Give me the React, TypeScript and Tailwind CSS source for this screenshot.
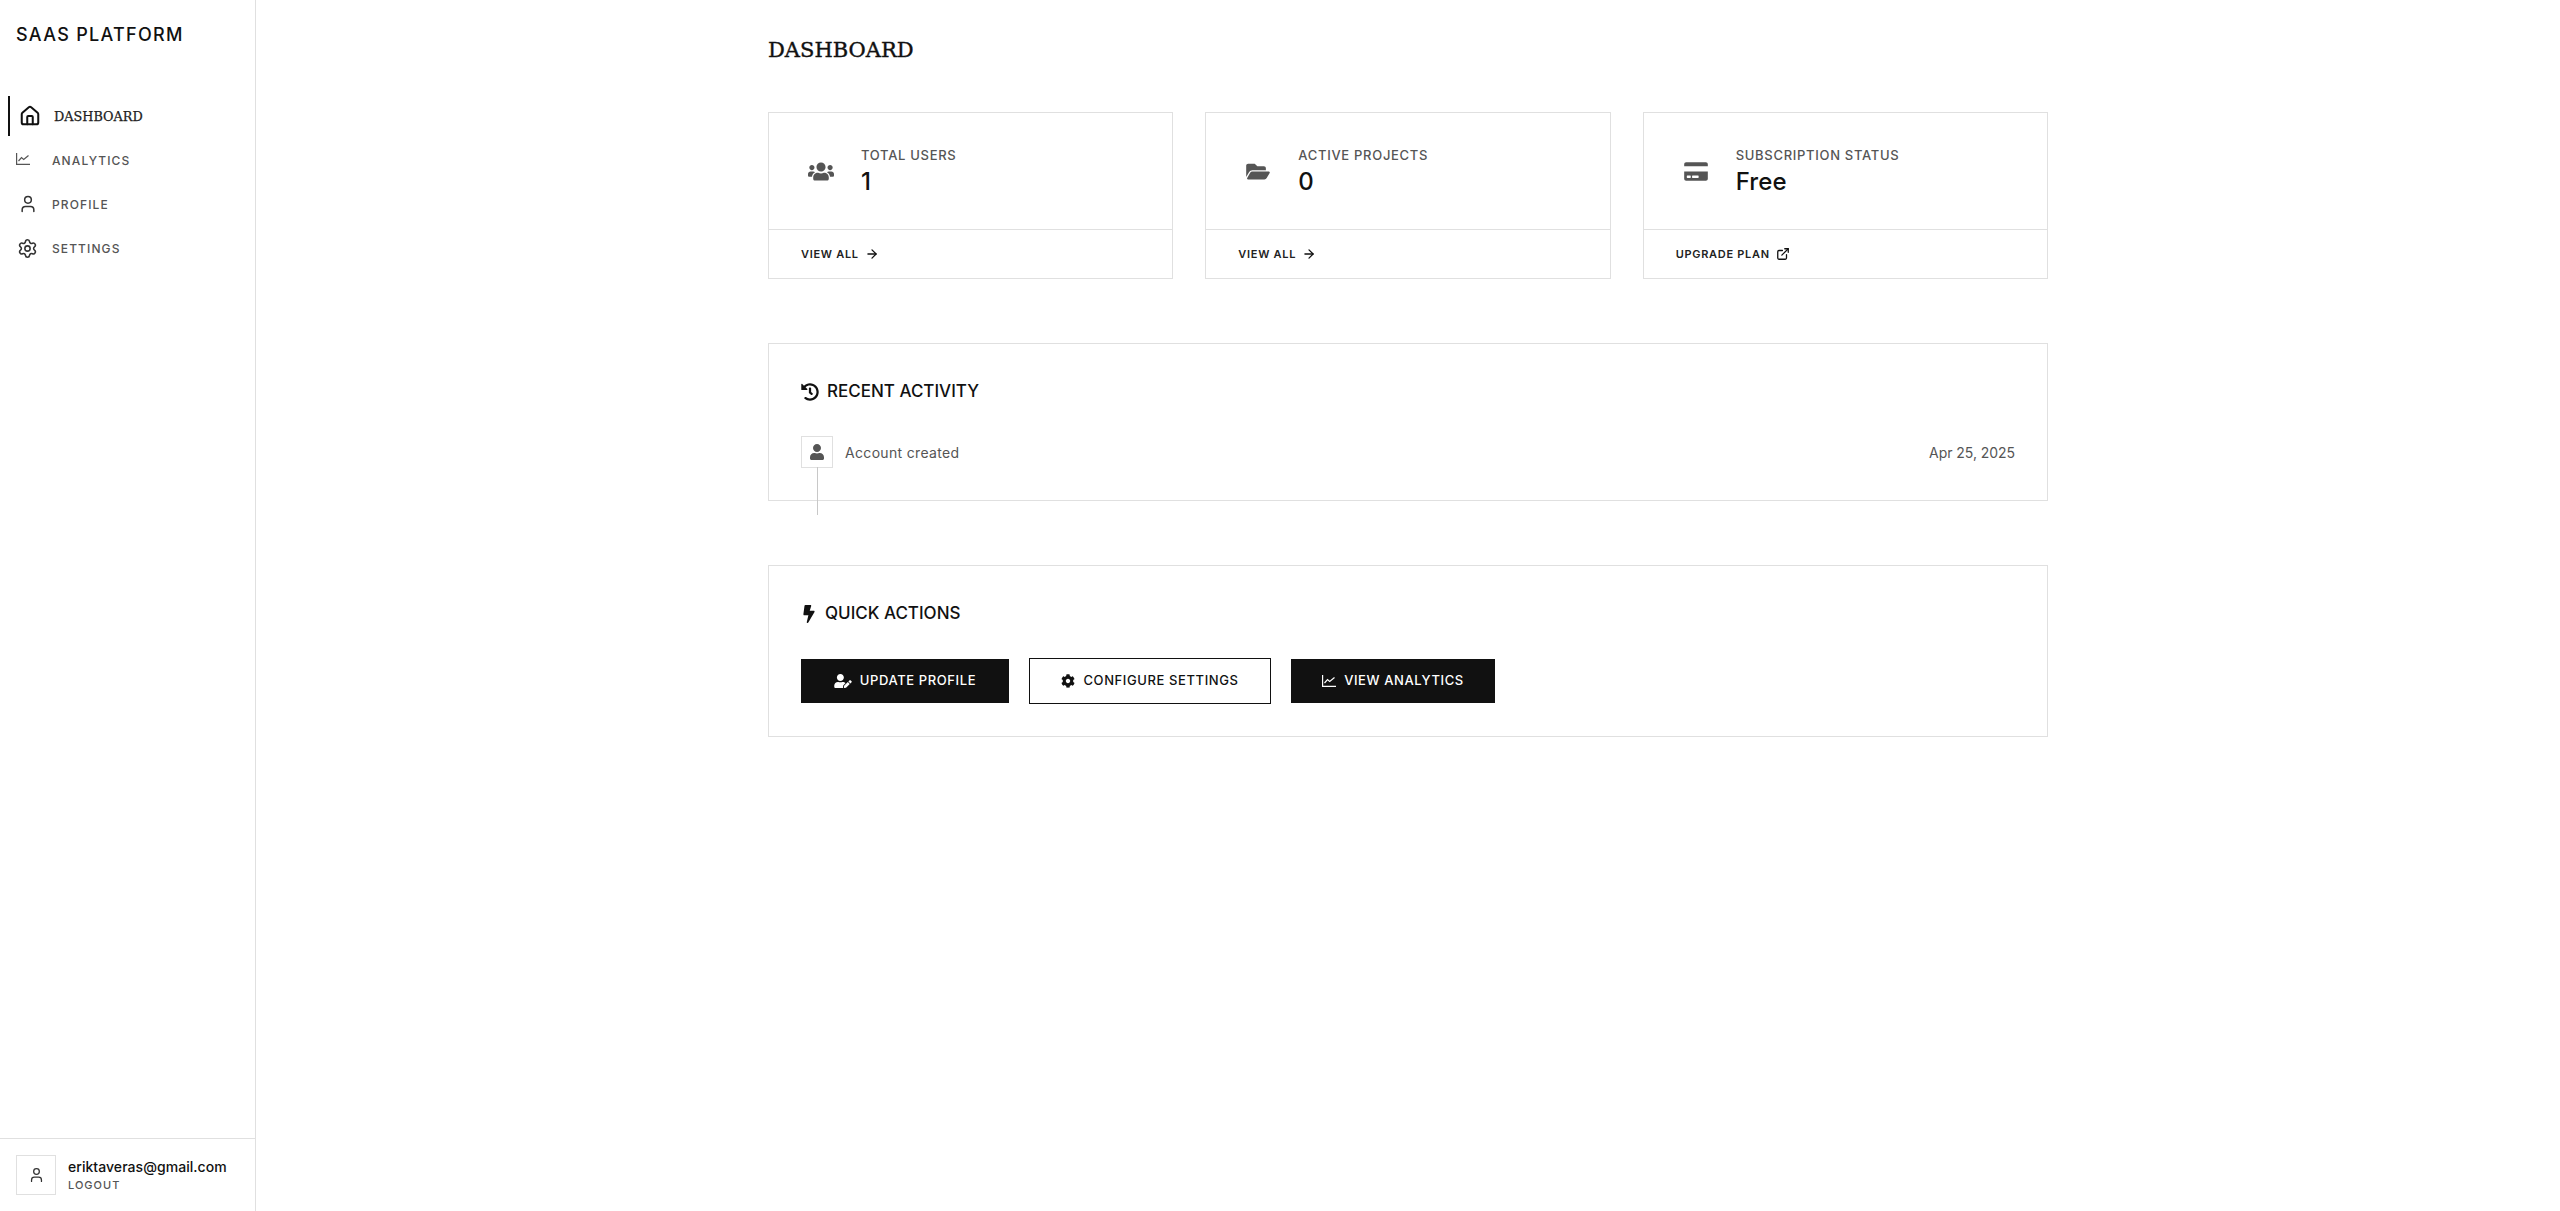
import React from 'react';
import { Home, User, Settings, ArrowRight, ExternalLink } from 'lucide-react';
import { FaUsers, FaFolderOpen, FaCreditCard, FaHistory, FaBolt, FaUser, FaUserEdit, FaCog } from 'react-icons/fa';

const ChartIcon = ({ className }: { className: string }) => (
  <svg viewBox="0 0 14 12" fill="none" stroke="currentColor" strokeWidth="1.2" className={className}>
    <path d="M0.6 0v11.4H14" />
    <path d="M2.5 8 5.5 4.6l2.2 1.8L12.5 2.5" />
  </svg>
);

const stats = [
  { icon: FaUsers, label: 'TOTAL USERS', value: '1', link: 'VIEW ALL', external: false },
  { icon: FaFolderOpen, label: 'ACTIVE PROJECTS', value: '0', link: 'VIEW ALL', external: false },
  { icon: FaCreditCard, label: 'SUBSCRIPTION STATUS', value: 'Free', link: 'UPGRADE PLAN', external: true },
];

const App: React.FC = () => {
  return (
    <div className="flex h-[1211px] bg-white font-['Inter',sans-serif] text-[#111111] overflow-hidden">
      {/* Sidebar */}
      <aside className="flex flex-col w-[256px] shrink-0 border-r border-[#e0e0e0]">
        <div className="h-[68px] pl-4 pt-[22px] text-[18px] leading-[26px] font-medium tracking-[1.3px]">
          SAAS PLATFORM
        </div>
        <nav className="flex flex-col gap-1 pl-2 pt-7">
          <a className="flex items-center h-10 border-l-2 border-[#111111] pl-[9px]">
            <Home className="w-[22px] h-[22px] mr-[13px]" strokeWidth={2.2} />
            <span className="mt-px font-['DejaVu_Serif',serif] text-[12.8px] text-[#222222] [-webkit-text-stroke:0.25px]">DASHBOARD</span>
          </a>
          <a className="flex h-10 pl-2 text-[#555555]">
            <ChartIcon className="w-[14px] h-3 mt-[13px] mr-[22px]" />
            <span className="text-[12px] tracking-[1.1px] font-medium leading-[41px]">ANALYTICS</span>
          </a>
          <a className="flex items-center h-10 pl-[10px] text-[#555555]">
            <User className="w-[20px] h-[22px] mr-[14px] text-[#333333]" strokeWidth={1.8} />
            <span className="mt-[2px] text-[12px] tracking-[1.1px] font-medium">PROFILE</span>
          </a>
          <a className="flex items-center h-10 pl-[9px] text-[#555555]">
            <Settings className="w-[21px] h-[21px] mr-[14px] text-[#333333]" strokeWidth={1.8} />
            <span className="mt-[2px] text-[12px] tracking-[1.1px] font-medium">SETTINGS</span>
          </a>
        </nav>
        <div className="mt-auto flex items-center h-[73px] border-t border-[#e0e0e0] pl-4 gap-3">
          <div className="flex items-center justify-center w-10 h-10 border border-[#e0e0e0]">
            <User className="w-[17px] h-[18px] text-[#333333]" strokeWidth={1.8} />
          </div>
          <div>
            <div className="text-[14px] leading-[20px] font-medium tracking-[0.05px]">eriktaveras@gmail.com</div>
            <div className="text-[11px] leading-[16px] tracking-[1px] font-medium text-[#555555]">LOGOUT</div>
          </div>
        </div>
      </aside>

      {/* Main */}
      <main className="flex-1 min-w-0">
        <div className="w-[1280px] mx-auto pt-[34px]">
          <h1 className="font-['DejaVu_Serif',serif] text-[21px] leading-8 mb-[46px] [-webkit-text-stroke:0.4px]">DASHBOARD</h1>

          <div className="grid grid-cols-3 gap-8 mb-16">
            {stats.map((s) => {
              const Icon = s.icon;
              return (
                <div key={s.label} className="border border-[#e0e0e0]">
                  <div className="flex items-center h-[116px] pl-10">
                    <Icon className="w-[26px] h-[21px] text-[#555555] mr-[27px] -ml-px" />
                    <div>
                      <div className="text-[13px] leading-5 font-medium tracking-[0.7px] text-[#555555]">{s.label}</div>
                      <div className="pt-px text-[24px] leading-[32px] font-medium tracking-[0.1px]">{s.value}</div>
                    </div>
                  </div>
                  <div className="flex items-center h-[49px] border-t border-[#e0e0e0] pl-8">
                    <span className="text-[11px] font-semibold tracking-[0.7px] text-[#222222]">{s.link}</span>
                    {s.external ? (
                      <ExternalLink className="w-[14px] h-[14px] ml-[6px]" strokeWidth={2.2} />
                    ) : (
                      <ArrowRight className="w-[14px] h-[14px] ml-[6px]" strokeWidth={2.2} />
                    )}
                  </div>
                </div>
              );
            })}
          </div>

          <section className="h-[158px] border border-[#e0e0e0] px-8 pt-[34px] mb-16">
            <h2 className="flex items-center h-7 text-[17px] font-medium">
              <FaHistory className="w-[18px] h-[18px] mr-[8px]" />
              RECENT ACTIVITY
            </h2>
            <div className="flex items-center justify-between mt-[30px]">
              <div className="flex items-center">
                <div className="relative flex items-center justify-center w-8 h-8 border border-[#e0e0e0]">
                  <FaUser className="w-[14px] h-4 text-[#555555]" />
                  <span className="absolute left-[15px] top-[30px] w-px h-[48px] bg-[#c8c8c8]" />
                </div>
                <span className="ml-3 text-[14px] tracking-[0.33px] text-[#555555]">Account created</span>
              </div>
              <span className="text-[14px] tracking-[-0.05px] text-[#555555]">Apr 25, 2025</span>
            </div>
          </section>

          <section className="h-[172px] border border-[#e0e0e0] px-8 pt-[34px]">
            <h2 className="flex items-center h-7 text-[17px] font-medium">
              <FaBolt className="w-[16px] h-[18px] mr-[8px]" />
              QUICK ACTIONS
            </h2>
            <div className="flex items-center gap-5 mt-[30px]">
              <button className="flex items-center justify-center w-[208px] h-11 bg-[#111111] text-white text-[13px] font-medium tracking-[0.6px]">
                <FaUserEdit className="w-[18px] h-[14px] mr-2" />
                UPDATE PROFILE
              </button>
              <button className="flex items-center justify-center w-[242px] h-[46px] border border-[#111111] text-[13px] font-medium tracking-[0.6px]">
                <FaCog className="w-[14px] h-[14px] mr-2" />
                CONFIGURE SETTINGS
              </button>
              <button className="flex items-center justify-center w-[204px] h-11 bg-[#111111] text-white text-[13px] font-medium tracking-[0.6px]">
                <ChartIcon className="w-[14px] h-3 mr-2" />
                VIEW ANALYTICS
              </button>
            </div>
          </section>
        </div>
      </main>
    </div>
  );
};

export default App;
